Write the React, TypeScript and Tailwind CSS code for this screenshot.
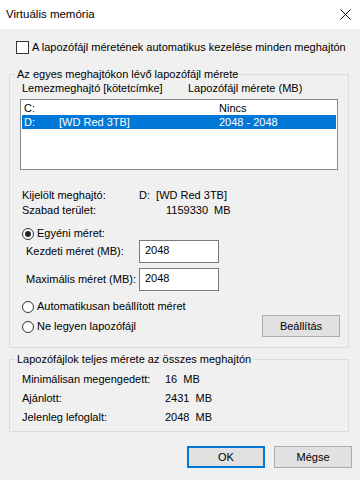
const Radio = ({ checked }: { checked?: boolean }) => (
  <span className="w-[12px] h-[12px] rounded-full border border-[#333] bg-white flex items-center justify-center shrink-0">
    {checked && <span className="w-[6px] h-[6px] rounded-full bg-[#222]" />}
  </span>
);

const Btn = ({ label, primary }: { label: string; primary?: boolean }) => (
  <div className={`w-[78px] h-[22px] flex items-center justify-center bg-[#e1e1e1] border ${primary ? 'border-[#0078d7] border-2' : 'border-[#adadad]'}`}>{label}</div>
);

const App = () => {
  return (
    <div className="w-[360px] h-[480px] bg-[#f0f0f0] font-['Liberation_Sans',Arial,sans-serif] text-[11px] leading-[15px] text-black whitespace-nowrap flex flex-col overflow-hidden">
      <div className="h-[29px] bg-white flex items-center justify-between pl-[6px] pr-[8px] shrink-0">
        <span className="text-[11.5px]">Virtuális memória</span>
        <svg width="11" height="11" viewBox="0 0 11 11" className="mr-[1px]">
          <path d="M0.5 0.5 L10.5 10.5 M10.5 0.5 L0.5 10.5" stroke="#111" strokeWidth="1" />
        </svg>
      </div>
      <div className="px-[9px] pt-[11px]">
        <label className="flex items-center gap-[3px] pl-[7px]">
          <span className="w-[13px] h-[13px] border border-[#333] bg-white shrink-0" />
          <span>A lapozófájl méretének automatikus kezelése minden meghajtón</span>
        </label>
        <fieldset className="mt-[12px] w-[340px] border border-[#dcdcdc] px-[10px] pb-[10px]">
          <legend className="-ml-[5px] px-[2px]">Az egyes meghajtókon lévő lapozófájl mérete</legend>
          <div className="flex -mt-[1px] pl-[2px]">
            <span className="w-[166px]">Lemezmeghajtó [kötetcímke]</span>
            <span>Lapozófájl mérete (MB)</span>
          </div>
          <div className="mt-[3px] h-[71px] border border-[#828790] bg-white px-[1px] pt-[1px]">
            <div className="grid grid-cols-[35px_160px_1fr] h-[14px] items-center px-[2px]">
              <span>C:</span><span></span><span>Nincs</span>
            </div>
            <div className="grid grid-cols-[35px_160px_1fr] h-[14px] items-center px-[2px] bg-[#0078d7] text-white">
              <span>D:</span><span>[WD Red 3TB]</span><span>2048 - 2048</span>
            </div>
          </div>
          <div className="mt-[18px] flex pl-[2px]">
            <span className="w-[117px]">Kijelölt meghajtó:</span>
            <span className="whitespace-pre">D:  [WD Red 3TB]</span>
          </div>
          <div className="flex pl-[2px]">
            <span className="w-[144px]">Szabad terület:</span>
            <span className="whitespace-pre">1159330  MB</span>
          </div>
          <label className="mt-[8px] flex items-center gap-[3px] pl-[2px]">
            <Radio checked />
            <span>Egyéni méret:</span>
          </label>
          <div className="mt-[-1px] flex items-center pl-[6px]">
            <span className="w-[113px]">Kezdeti méret (MB):</span>
            <div className="w-[80px] h-[23px] border border-[#7a7a7a] bg-white px-[5px] pt-[2px]">2048</div>
          </div>
          <div className="mt-[5px] flex items-center pl-[6px]">
            <span className="w-[113px]">Maximális méret (MB):</span>
            <div className="w-[80px] h-[23px] border border-[#7a7a7a] bg-white px-[5px] pt-[2px]">2048</div>
          </div>
          <label className="mt-[8px] flex items-center gap-[3px] pl-[2px]">
            <Radio />
            <span>Automatikusan beállított méret</span>
          </label>
          <div className="mt-[2px] flex items-center justify-between">
            <label className="flex items-center gap-[3px] pl-[2px]">
              <Radio />
              <span>Ne legyen lapozófájl</span>
            </label>
            <div className="mr-[-2px] -mt-[1px]"><Btn label="Beállítás" /></div>
          </div>
        </fieldset>
        <fieldset className="mt-[4px] w-[340px] border border-[#dcdcdc] px-[12px] pb-[6px]">
          <legend className="-ml-[7px] px-[2px]">Lapozófájlok teljes mérete az összes meghajtón</legend>
          <div className="flex mt-[5px]">
            <span className="w-[143px]">Minimálisan megengedett:</span>
            <span className="whitespace-pre">16  MB</span>
          </div>
          <div className="flex mt-[4px]">
            <span className="w-[143px]">Ajánlott:</span>
            <span className="whitespace-pre">2431  MB</span>
          </div>
          <div className="flex mt-[4px]">
            <span className="w-[143px]">Jelenleg lefoglalt:</span>
            <span className="whitespace-pre">2048  MB</span>
          </div>
        </fieldset>
        <div className="mt-[14px] flex justify-end gap-[9px] mr-[-1px]">
          <Btn label="OK" primary />
          <Btn label="Mégse" />
        </div>
      </div>
    </div>
  );
};

export default App;
